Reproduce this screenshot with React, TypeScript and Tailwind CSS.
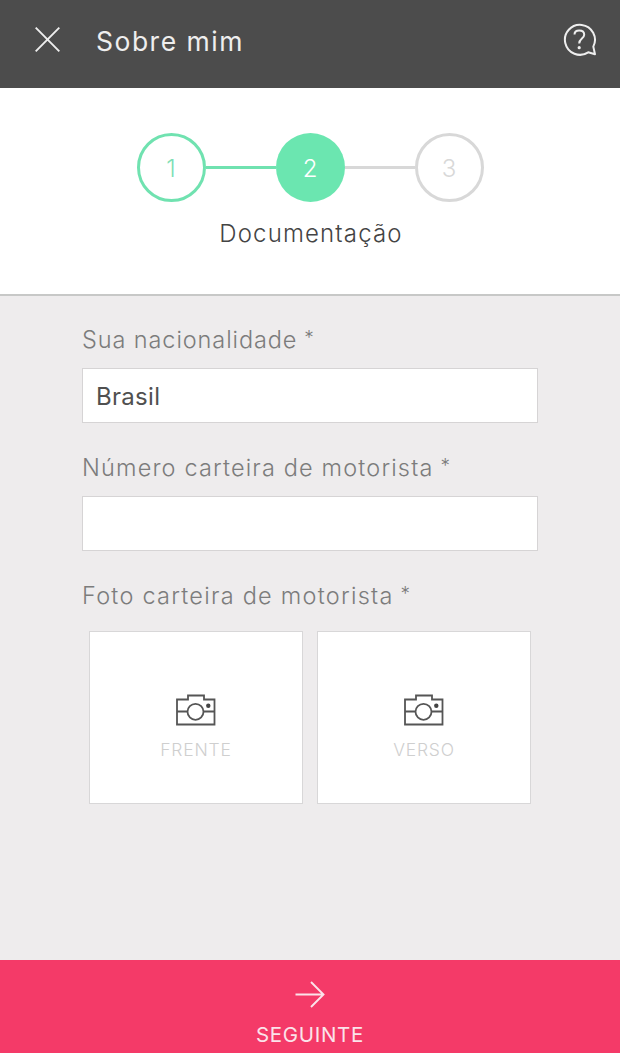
import React from 'react';

const CameraIcon = () => (
  <svg width="40" height="32" viewBox="0 0 40 32" fill="none" stroke="#555555" strokeWidth="1.8">
    <path d="M1 5.5H12V1.5H28V5.5H38.5V30.5H1Z" />
    <path d="M1 17.5H11.5M27.5 17.5H38.5" />
    <circle cx="19.5" cy="17.8" r="8" />
    <circle cx="32.3" cy="11.7" r="2.2" fill="#444444" stroke="none" />
  </svg>
);

const Label = ({ children }: { children: React.ReactNode }) => (
  <div className="flex h-[56px] pt-3 text-[23.5px] leading-8 font-light whitespace-nowrap text-[#7c7c7c]">
    {children}
    <span className="ml-[7px] text-[19px] leading-[27px]">*</span>
  </div>
);

const App = () => {
  return (
    <div className="flex h-[1053px] w-[620px] flex-col overflow-hidden bg-[#eeeced] font-['Inter','Liberation_Sans',sans-serif]">
      <header className="flex h-[88px] shrink-0 items-start bg-[#4c4c4c]">
        <svg className="mt-[27px] ml-[35px]" width="25" height="25" viewBox="0 0 25 25" fill="none" stroke="#eeeeee" strokeWidth="1.9">
          <path d="M0.7 0.7L24.3 24.3M24.3 0.7L0.7 24.3" />
        </svg>
        <h1 className="mt-[25px] ml-[36px] text-[26.5px] leading-8 font-normal tracking-[1.5px] whitespace-nowrap text-[#eeeeee]">
          Sobre mim
        </h1>
        <svg className="mt-[22px] mr-[23px] ml-auto" width="34" height="34" viewBox="0 0 34 34" fill="none" stroke="#eeeeee" strokeWidth="2">
          <path d="M25.2 30.3A15 15 0 1 1 30.3 24.6L32 32.2Z" strokeLinejoin="round" />
          <path d="M11.5 12.6C11.5 9.8 13.6 8.5 16.2 8.5C19.2 8.5 21.2 10.2 21.2 12.7C21.2 16.6 16.2 16.6 16.2 21.5" />
          <circle cx="16.2" cy="25.7" r="1.6" fill="#eeeeee" stroke="none" />
        </svg>
      </header>

      {/* Steps */}
      <section className="flex h-[208px] shrink-0 flex-col items-center border-b-2 border-[#c7c8c7] bg-white pt-[45px]">
        <div className="flex items-center text-[24px] font-light">
          <div className="flex size-[69px] items-center justify-center rounded-full border-3 border-[#70e2b0] pt-0.5 text-[#80dfb6]">1</div>
          <div className="h-[3px] w-[70px] bg-[#70e2b0]" />
          <div className="flex size-[69px] items-center justify-center rounded-full bg-[#6be6b0] pt-0.5 text-white">2</div>
          <div className="h-[3px] w-[70px] bg-[#d8d8d8]" />
          <div className="flex size-[69px] items-center justify-center rounded-full border-3 border-[#d8d8d8] pt-0.5 text-[#d8d8d8]">3</div>
        </div>
        <div className="mt-4 pl-0.5 text-[24px] leading-8 font-light tracking-[1.15px] text-[#444444]">Documentação</div>
      </section>

      {/* Form */}
      <main className="flex-1 px-[82px] pt-4">
        <Label><span className="tracking-[0.9px]">Sua nacionalidade</span></Label>
        <div className="flex h-[55px] items-center border border-[#d6d4d5] bg-white px-[13px] pt-0.5 text-[24px] tracking-[0.3px] text-[#505050]">
          Brasil
        </div>
        <div className="pt-[17px]">
          <Label><span className="tracking-[1.15px]">Número carteira de motorista</span></Label>
          <div className="h-[55px] border border-[#d6d4d5] bg-white" />
        </div>
        <div className="pt-[17px]">
          <Label><span className="tracking-[1.25px]">Foto carteira de motorista</span></Label>
        </div>
        <div className="mt-[7px] flex justify-center gap-[14px]">
          {['FRENTE', 'VERSO'].map((side) => (
            <div key={side} className="flex h-[173px] w-[214px] flex-col items-center border border-[#d8d7d8] bg-white pt-[62px]">
              <CameraIcon />
              <span className="mt-3 text-[17.5px] leading-6 font-light tracking-[0.8px] text-[#cfcfcf]">{side}</span>
            </div>
          ))}
        </div>
      </main>

      <footer className="flex h-[93px] shrink-0 flex-col items-center bg-[#f43a68] pt-[21px] text-[#fbe3ea]">
        <svg width="30" height="28" viewBox="0 0 30 28" fill="none" stroke="currentColor" strokeWidth="1.9">
          <path d="M0.5 13.5H28.5M16 1L28.5 13.5L16 26" />
        </svg>
        <span className="mt-[14px] text-[20.5px] leading-6 tracking-[0.7px]">SEGUINTE</span>
      </footer>
    </div>
  );
};

export default App;
